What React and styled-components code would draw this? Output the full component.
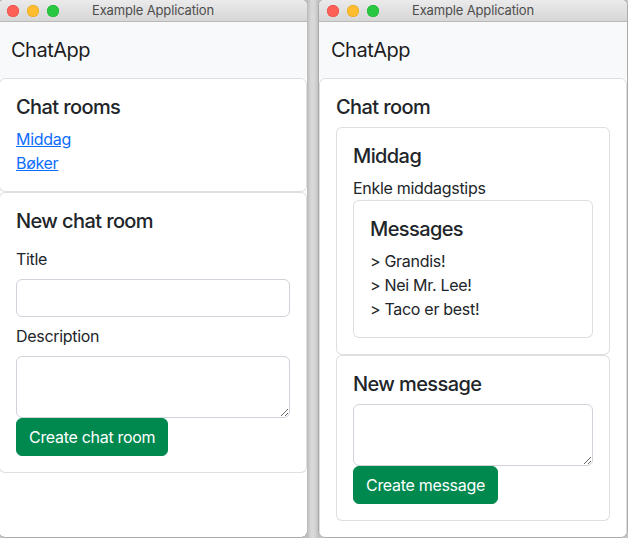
import React from "react";
import styled, { createGlobalStyle } from "styled-components";

const GlobalStyle = createGlobalStyle`
  html, body { margin: 0; padding: 0; }
  body {
    background: #c4c4c4;
    font-family: Inter, "Liberation Sans", Arial, sans-serif;
    color: #212529;
    letter-spacing: -0.3px;
    -webkit-font-smoothing: antialiased;
  }
  * { box-sizing: border-box; }
`;

const Desktop = styled.div`
  display: flex;
  width: 629px;
  height: 538px;
  margin-left: -1px;
  background: #c4c4c4;
  overflow: hidden;
`;

const Bezel = styled.div`
  width: 12px;
  flex: none;
  background: linear-gradient(90deg, #b9b9b9 0%, #d6d6d6 30%, #d9d9d9 60%, #bdbdbd 100%);
`;

const Window = styled.div`
  width: 308px;
  height: 537px;
  flex: none;
  display: flex;
  flex-direction: column;
  background: #ffffff;
  border-radius: 5px 5px 6px 6px;
  overflow: hidden;
  box-shadow: 0 0 0 0.5px rgba(0, 0, 0, 0.25);
`;

const TitleBar = styled.div`
  height: 22px;
  flex: none;
  display: grid;
  grid-template-columns: 1fr auto 1fr;
  align-items: center;
  background: linear-gradient(180deg, #ebebeb 0%, #d6d6d6 100%);
  border-bottom: 1px solid #b9b9b9;
  padding: 0 8px;
`;

const Lights = styled.div`
  display: flex;
  gap: 8px;
  align-items: center;
`;

const Light = styled.span`
  width: 12px;
  height: 12px;
  border-radius: 50%;
  background: ${(p) => p.$color};
  box-shadow: inset 0 0 0 0.5px ${(p) => p.$edge};
`;

const WindowTitle = styled.div`
  font-size: 13px;
  letter-spacing: -0.15px;
  color: #4d4d4d;
  line-height: 21px;
  white-space: nowrap;
`;

const Navbar = styled.nav`
  height: 56px;
  flex: none;
  display: flex;
  align-items: center;
  padding: 0 12px;
  background: #f8f9fa;
`;

const Brand = styled.span`
  font-size: 20px;
  line-height: 30px;
  letter-spacing: -0.5px;
  color: rgba(0, 0, 0, 0.9);
`;

const Content = styled.div`
  display: flex;
  flex-direction: column;
`;

const Card = styled.div`
  display: flex;
  flex-direction: column;
  border: 1px solid rgba(0, 0, 0, 0.125);
  border-radius: 6px;
  padding: 16px;
  background: #fff;
`;

const CardTitle = styled.h5`
  margin: 0 0 8px;
  font-size: 20px;
  font-weight: 500;
  line-height: 24px;
  letter-spacing: -0.6px;
  color: #212529;
`;

const RoomLink = styled.a`
  display: block;
  align-self: flex-start;
  color: #0d6efd;
  text-decoration: underline;
  font-size: 16px;
  line-height: 24px;
`;

const Text = styled.div`
  font-size: 16px;
  line-height: 24px;
`;

const MessageLine = styled.div`
  font-size: 16px;
  line-height: 24px;
`;

const Form = styled.form`
  display: flex;
  flex-direction: column;
  margin: 0;
`;

const Label = styled.label`
  display: block;
  font-size: 16px;
  line-height: 24px;
  margin: 7px 0 8px;
  &:first-child { margin-top: 6px; }
`;

const Input = styled.input`
  display: block;
  width: 100%;
  height: 38px;
  border: 1px solid #ced4da;
  border-radius: 6px;
  padding: 6px 12px;
  font: inherit;
  background: #fff;
`;

const TextArea = styled.textarea`
  display: block;
  width: 100%;
  height: 62px;
  border: 1px solid #ced4da;
  border-radius: 6px;
  padding: 6px 12px;
  font: inherit;
  resize: vertical;
  background: #fff;
`;

const Button = styled.button`
  align-self: flex-start;
  height: 38px;
  padding: 6px 12px;
  border: 1px solid #00894f;
  border-radius: 6px;
  background: #00894f;
  color: #fff;
  font-family: inherit;
  font-size: 16px;
  line-height: 24px;
  letter-spacing: -0.3px;
  cursor: pointer;
`;

function WindowFrame({ children }) {
  return (
    <Window>
      <TitleBar>
        <Lights>
          <Light $color="#fe5f57" $edge="#e0443e" />
          <Light $color="#febc2e" $edge="#dea123" />
          <Light $color="#28c840" $edge="#1aab29" />
        </Lights>
        <WindowTitle>Example Application</WindowTitle>
        <span />
      </TitleBar>
      <Navbar>
        <Brand>ChatApp</Brand>
      </Navbar>
      {children}
    </Window>
  );
}

export default function App() {
  return (
    <>
      <GlobalStyle />
      <Desktop>
        <WindowFrame>
          <Content>
            <Card>
              <CardTitle>Chat rooms</CardTitle>
              <RoomLink href="#middag">Middag</RoomLink>
              <RoomLink href="#boker">Bøker</RoomLink>
            </Card>
            <Card>
              <CardTitle>New chat room</CardTitle>
              <Form onSubmit={(e) => e.preventDefault()}>
                <Label>Title</Label>
                <Input type="text" />
                <Label>Description</Label>
                <TextArea rows={2} />
                <Button type="submit">Create chat room</Button>
              </Form>
            </Card>
          </Content>
        </WindowFrame>
        <Bezel />
        <WindowFrame>
          <Content>
            <Card>
              <CardTitle>Chat room</CardTitle>
              <Card>
                <CardTitle>Middag</CardTitle>
                <Text>Enkle middagstips</Text>
                <Card>
                  <CardTitle>Messages</CardTitle>
                  <MessageLine>&gt; Grandis!</MessageLine>
                  <MessageLine>&gt; Nei Mr. Lee!</MessageLine>
                  <MessageLine>&gt; Taco er best!</MessageLine>
                </Card>
              </Card>
              <Card>
                <CardTitle>New message</CardTitle>
                <Form onSubmit={(e) => e.preventDefault()}>
                  <TextArea rows={2} />
                  <Button type="submit">Create message</Button>
                </Form>
              </Card>
            </Card>
          </Content>
        </WindowFrame>
      </Desktop>
    </>
  );
}
